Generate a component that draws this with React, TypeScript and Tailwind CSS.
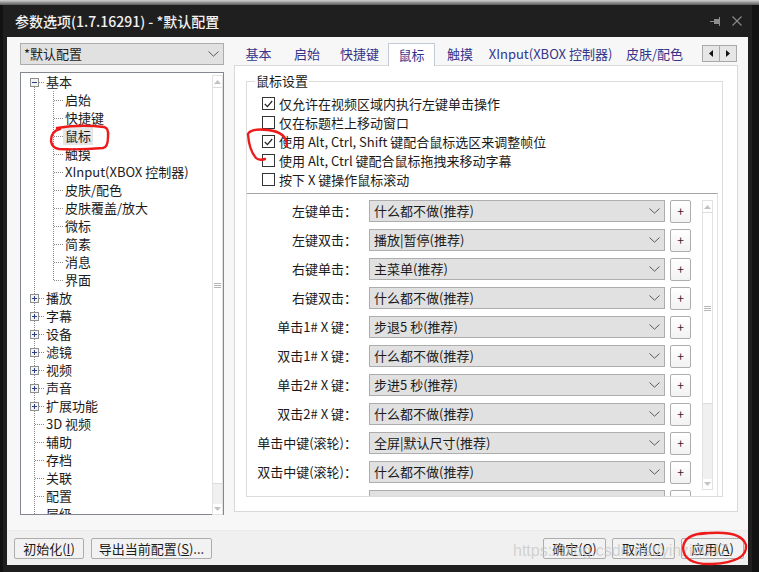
import React from "react";

type TreeNode = {
  label: string;
  kind: "open" | "closed" | "leaf" | "child" | "lastChild";
  selected?: boolean;
};

const treeNodes: TreeNode[] = [
  { label: "基本", kind: "open" },
  { label: "启始", kind: "child" },
  { label: "快捷键", kind: "child" },
  { label: "鼠标", kind: "child", selected: true },
  { label: "触摸", kind: "child" },
  { label: "XInput(XBOX 控制器)", kind: "child" },
  { label: "皮肤/配色", kind: "child" },
  { label: "皮肤覆盖/放大", kind: "child" },
  { label: "微标", kind: "child" },
  { label: "简素", kind: "child" },
  { label: "消息", kind: "child" },
  { label: "界面", kind: "lastChild" },
  { label: "播放", kind: "closed" },
  { label: "字幕", kind: "closed" },
  { label: "设备", kind: "closed" },
  { label: "滤镜", kind: "closed" },
  { label: "视频", kind: "closed" },
  { label: "声音", kind: "closed" },
  { label: "扩展功能", kind: "closed" },
  { label: "3D 视频", kind: "leaf" },
  { label: "辅助", kind: "leaf" },
  { label: "存档", kind: "leaf" },
  { label: "关联", kind: "leaf" },
  { label: "配置", kind: "leaf" },
  { label: "层级", kind: "leaf" },
];

const tabs = [
  { label: "基本", w: "w-[49px]" },
  { label: "启始", w: "w-[48px]" },
  { label: "快捷键", w: "w-[57px]" },
  { label: "鼠标", w: "w-[47px]", active: true },
  { label: "触摸", w: "w-[50px]" },
  { label: "XInput(XBOX 控制器)", w: "w-[131px]" },
  { label: "皮肤/配色", w: "w-[77px]" },
];

const checks = [
  { label: "仅允许在视频区域内执行左键单击操作", on: true },
  { label: "仅在标题栏上移动窗口", on: false },
  { label: "使用 Alt, Ctrl, Shift 键配合鼠标选区来调整帧位", on: true },
  { label: "使用 Alt, Ctrl 键配合鼠标拖拽来移动字幕", on: false },
  { label: "按下 X 键操作鼠标滚动", on: false },
];

// the last row is cut by the group box, only its top edge shows
const actions = [
  ["左键单击：", "什么都不做(推荐)"],
  ["左键双击：", "播放|暂停(推荐)"],
  ["右键单击：", "主菜单(推荐)"],
  ["右键双击：", "什么都不做(推荐)"],
  ["单击1# X 键：", "步退5 秒(推荐)"],
  ["双击1# X 键：", "什么都不做(推荐)"],
  ["单击2# X 键：", "步进5 秒(推荐)"],
  ["双击2# X 键：", "什么都不做(推荐)"],
  ["单击中键(滚轮)：", "全屏|默认尺寸(推荐)"],
  ["双击中键(滚轮)：", "什么都不做(推荐)"],
  ["", ""],
];

function Chevron() {
  return (
    <svg width="11" height="6" viewBox="0 0 11 6">
      <path d="M0.5 0.5 L5.5 5.2 L10.5 0.5" fill="none" stroke="#5a5a5a" strokeWidth="1" />
    </svg>
  );
}

function Connector({ node, first }: { node: TreeNode; first: boolean }) {
  const dot = { stroke: "#8a8a8a", strokeDasharray: "1 1" };
  if (node.kind === "child" || node.kind === "lastChild") {
    return (
      <svg width="42" height="18" className="shrink-0">
        <line x1="13.5" y1="0" x2="13.5" y2="18" {...dot} />
        <line x1="32.5" y1="0" x2="32.5" y2={node.kind === "lastChild" ? 9 : 18} {...dot} />
        <line x1="33" y1="9.5" x2="42" y2="9.5" {...dot} />
      </svg>
    );
  }
  if (node.kind === "leaf") {
    return (
      <svg width="25" height="18" className="shrink-0">
        <line x1="13.5" y1="0" x2="13.5" y2="18" {...dot} />
        <line x1="14" y1="9.5" x2="23" y2="9.5" {...dot} />
      </svg>
    );
  }
  return (
    <svg width="25" height="18" className="shrink-0">
      {!first && <line x1="13.5" y1="0" x2="13.5" y2="5" {...dot} />}
      <line x1="13.5" y1="14" x2="13.5" y2="18" {...dot} />
      <line x1="18" y1="9.5" x2="23" y2="9.5" {...dot} />
      <rect x="9.5" y="5.5" width="8" height="8" fill="#f4f4f4" stroke="#8e8f8f" />
      <line x1="11" y1="9.5" x2="16" y2="9.5" stroke="#2a3f80" />
      {node.kind === "closed" && <line x1="13.5" y1="7" x2="13.5" y2="12" stroke="#2a3f80" />}
    </svg>
  );
}

function TreeScroll() {
  return (
    <div className="mt-[2px] flex h-[440px] w-[11px] flex-col border border-[#e2e2e2] bg-[#f0f0f0]">
      <div className="flex h-[11px] items-center justify-center bg-white">
        <svg width="7" height="4"><path d="M0 4 L3.5 0 L7 4 Z" fill="#c2c2c2" /></svg>
      </div>
      <div className="flex h-[397px] items-center justify-center border-y border-[#dcdcdc] bg-white">
        <svg width="7" height="5">
          <line x1="0" y1="0.5" x2="7" y2="0.5" stroke="#b5b5b5" />
          <line x1="0" y1="2.5" x2="7" y2="2.5" stroke="#b5b5b5" />
          <line x1="0" y1="4.5" x2="7" y2="4.5" stroke="#b5b5b5" />
        </svg>
      </div>
      <div className="flex-1" />
      <div className="flex h-[10px] items-center justify-center bg-white">
        <svg width="7" height="4"><path d="M0 0 L3.5 4 L7 0 Z" fill="#c2c2c2" /></svg>
      </div>
    </div>
  );
}

function PanelScroll() {
  return (
    <div className="mt-[6px] ml-[11px] flex h-[290px] w-[11px] flex-col border border-[#e2e2e2] bg-[#f0f0f0]">
      <div className="flex h-[11px] items-center justify-center bg-white">
        <svg width="7" height="4"><path d="M0 4 L3.5 0 L7 4 Z" fill="#c2c2c2" /></svg>
      </div>
      <div className="flex h-[192px] items-center justify-center border-y border-[#dcdcdc] bg-white">
        <svg width="7" height="5">
          <line x1="0" y1="0.5" x2="7" y2="0.5" stroke="#b5b5b5" />
          <line x1="0" y1="2.5" x2="7" y2="2.5" stroke="#b5b5b5" />
          <line x1="0" y1="4.5" x2="7" y2="4.5" stroke="#b5b5b5" />
        </svg>
      </div>
      <div className="flex-1" />
      <div className="flex h-[10px] items-center justify-center bg-white">
        <svg width="7" height="4"><path d="M0 0 L3.5 4 L7 0 Z" fill="#c2c2c2" /></svg>
      </div>
    </div>
  );
}

function Button({ children, w }: { children: React.ReactNode; w: string }) {
  return (
    <button
      className={`${w} flex h-[21px] items-center justify-center rounded-[2px] border border-[#adadad] bg-[#f2f2f2] text-[13px] leading-none text-[#1b1b1b]`}
    >
      {children}
    </button>
  );
}

export default function App() {
  return (
    <div className="relative h-[572px] w-[759px] overflow-hidden bg-[#121212] font-['Noto_Sans_CJK_SC',sans-serif] text-[13px] text-[#1b1b1b]">
      <div className="h-[5px] bg-linear-to-b from-[#d4d4d4] to-[#5a5a5a]" />
      <div className="ml-[3px] flex h-[567px] w-[749px] flex-col bg-[#1f1f1f]">
        {/* Title bar */}
        <div className="flex h-[32px] items-center pl-[12px] pr-[10px]">
          <span className="text-[14px] font-medium text-[#f2f2f2]">参数选项(1.7.16291) - *默认配置</span>
          <div className="ml-auto flex items-center gap-[11px]">
            <svg width="11" height="9" viewBox="0 0 11 9">
              <line x1="0" y1="4.5" x2="4" y2="4.5" stroke="#8d8d8d" />
              <rect x="4" y="2" width="5" height="5" fill="#8d8d8d" />
              <line x1="9.5" y1="0" x2="9.5" y2="9" stroke="#8d8d8d" />
            </svg>
            <svg width="10" height="10" viewBox="0 0 10 10">
              <path d="M0.5 0.5 L9.5 9.5 M9.5 0.5 L0.5 9.5" stroke="#8d8d8d" strokeWidth="1.1" />
            </svg>
          </div>
        </div>

        {/* Body */}
        <div className="mx-[4px] flex h-[528px] flex-col bg-[#f7f7f7]">
          <div className="flex h-[478px] pl-[13px] pt-[6px]">
            {/* Left column */}
            <div className="flex w-[204px] flex-col">
              <div className="flex h-[22px] items-center justify-between border border-[#adadad] bg-[#e1e1e1] pl-[3px] pr-[4px]">
                <span>*默认配置</span>
                <Chevron />
              </div>
              <div className="mt-[7px] flex h-[443px] border border-[#828790] bg-white">
                <div className="w-[191px] overflow-hidden">
                  {treeNodes.map((n, i) => (
                    <div key={n.label} className="flex h-[18px] items-center whitespace-nowrap leading-[18px]">
                      <Connector node={n} first={i === 0} />
                      <span className={n.selected ? "bg-[#e6e6e6] px-[2px]" : n.kind === "child" || n.kind === "lastChild" ? "pl-[2px]" : ""}>
                        {n.label}
                      </span>
                    </div>
                  ))}
                </div>
                <TreeScroll />
              </div>
            </div>

            {/* Right column */}
            <div className="ml-[10px] flex w-[504px] flex-col">
              <div className="flex h-[22px] items-start">
                {tabs.map((t) =>
                  t.active ? (
                    <div
                      key={t.label}
                      className={`${t.w} relative z-10 flex h-[23px] items-center justify-center border-x border-t border-[#c3cad6] bg-white text-[#34348a]`}
                    >
                      {t.label}
                    </div>
                  ) : (
                    <div key={t.label} className={`${t.w} flex h-[22px] items-center justify-center text-[#34348a]`}>
                      {t.label}
                    </div>
                  )
                )}
                <div className="ml-auto mr-[1px] mt-[2px] flex">
                  <div className="flex h-[17px] w-[18px] items-center justify-center border border-[#a9a9a9] bg-[#e6e6e6]">
                    <svg width="4" height="7"><path d="M4 0 L0 3.5 L4 7 Z" fill="#111" /></svg>
                  </div>
                  <div className="-ml-px flex h-[17px] w-[18px] items-center justify-center border border-[#a9a9a9] bg-[#e6e6e6]">
                    <svg width="4" height="7"><path d="M0 0 L4 3.5 L0 7 Z" fill="#111" /></svg>
                  </div>
                </div>
              </div>

              <div className="h-[447px] border border-[#d9d9d9] bg-white pl-[11px] pt-[6px]">
                <fieldset className="h-[425px] w-[477px] border border-[#dcdcdc]">
                  <legend className="ml-[8px] px-[1px] leading-[18px] text-[#1b1b1b]">鼠标设置</legend>
                  <div className="pl-[15px] pt-[4px]">
                    {checks.map((c) => (
                      <div key={c.label} className="flex h-[19px] items-center gap-[4px] whitespace-nowrap">
                        <span className="flex h-[13px] w-[13px] shrink-0 items-center justify-center border border-[#333] bg-white">
                          {c.on && (
                            <svg width="9" height="8" viewBox="0 0 9 8">
                              <path d="M0.8 4 L3.4 6.6 L8.2 1" fill="none" stroke="#222" strokeWidth="1.2" />
                            </svg>
                          )}
                        </span>
                        <span>{c.label}</span>
                      </div>
                    ))}
                  </div>
                  <div className="mt-[4px] flex h-[303px] w-[471px] overflow-hidden border-r border-t border-r-[#e2e2e2] border-t-[#a5a5a5]">
                    <div className="flex w-[444px] flex-col gap-[7px] pt-[6px]">
                      {actions.map(([label, value], i) => (
                        <div key={i} className="flex h-[22px] shrink-0 items-center">
                          <span className="w-[110px] whitespace-nowrap text-right">{label}</span>
                          <div className="ml-[12px] flex h-[22px] w-[296px] items-center justify-between border border-[#adadad] bg-[#e1e1e1] pl-[4px] pr-[4px]">
                            <span>{value}</span>
                            <Chevron />
                          </div>
                          <div className="ml-[5px] flex h-[23px] w-[21px] items-center justify-center rounded-[2px] border border-[#adadad] bg-linear-to-b from-white to-[#f2f2f2] text-[12px] leading-none text-[#3a1a2a]">
                            +
                          </div>
                        </div>
                      ))}
                    </div>
                    <PanelScroll />
                  </div>
                </fieldset>
              </div>
            </div>
          </div>

          {/* Bottom bar */}
          <div className="mt-[15px] flex h-[35px] items-start border-t border-[#ececec] bg-[#f0f0f0] pl-[7px] pr-[4px] pt-[7px]">
            <Button w="w-[70px]">
              初始化(<u>I</u>)
            </Button>
            <div className="ml-[7px]">
              <Button w="w-[121px]">
                导出当前配置(<u>S</u>)...
              </Button>
            </div>
            <div className="ml-auto flex gap-[6px]">
              <Button w="w-[63px]">
                确定(<u>O</u>)
              </Button>
              <Button w="w-[63px]">
                取消(<u>C</u>)
              </Button>
              <Button w="w-[63px]">
                应用(<u>A</u>)
              </Button>
            </div>
          </div>
        </div>
      </div>

      {/* watermark */}
      <div className="pointer-events-none absolute left-[513px] top-[539px] font-['Liberation_Sans',sans-serif] text-[16px] text-[#c4c4c4]/70">
        https://blog.csdn.net/yinzi0047
      </div>

      {/* red annotations */}
      <svg className="pointer-events-none absolute inset-0" width="759" height="572">
        <g fill="none" stroke="#ee1a1a" strokeWidth="2.4" strokeLinecap="round" strokeLinejoin="round">
          <path d="M57 128 Q80 124 104 127 Q109 128 108 137 Q108 147 103 148 Q80 150 59 149 Q52 148 51 141 Q51 131 60 129" />
          <path d="M287 146 Q287 132 268 130 Q251 128 248 134 Q249 150 256 158 Q259 161 265 159" />
          <path d="M700 534 Q741 529 746 545 Q748 562 712 564 Q684 565 683 548 Q684 534 706 533" />
        </g>
      </svg>
    </div>
  );
}
